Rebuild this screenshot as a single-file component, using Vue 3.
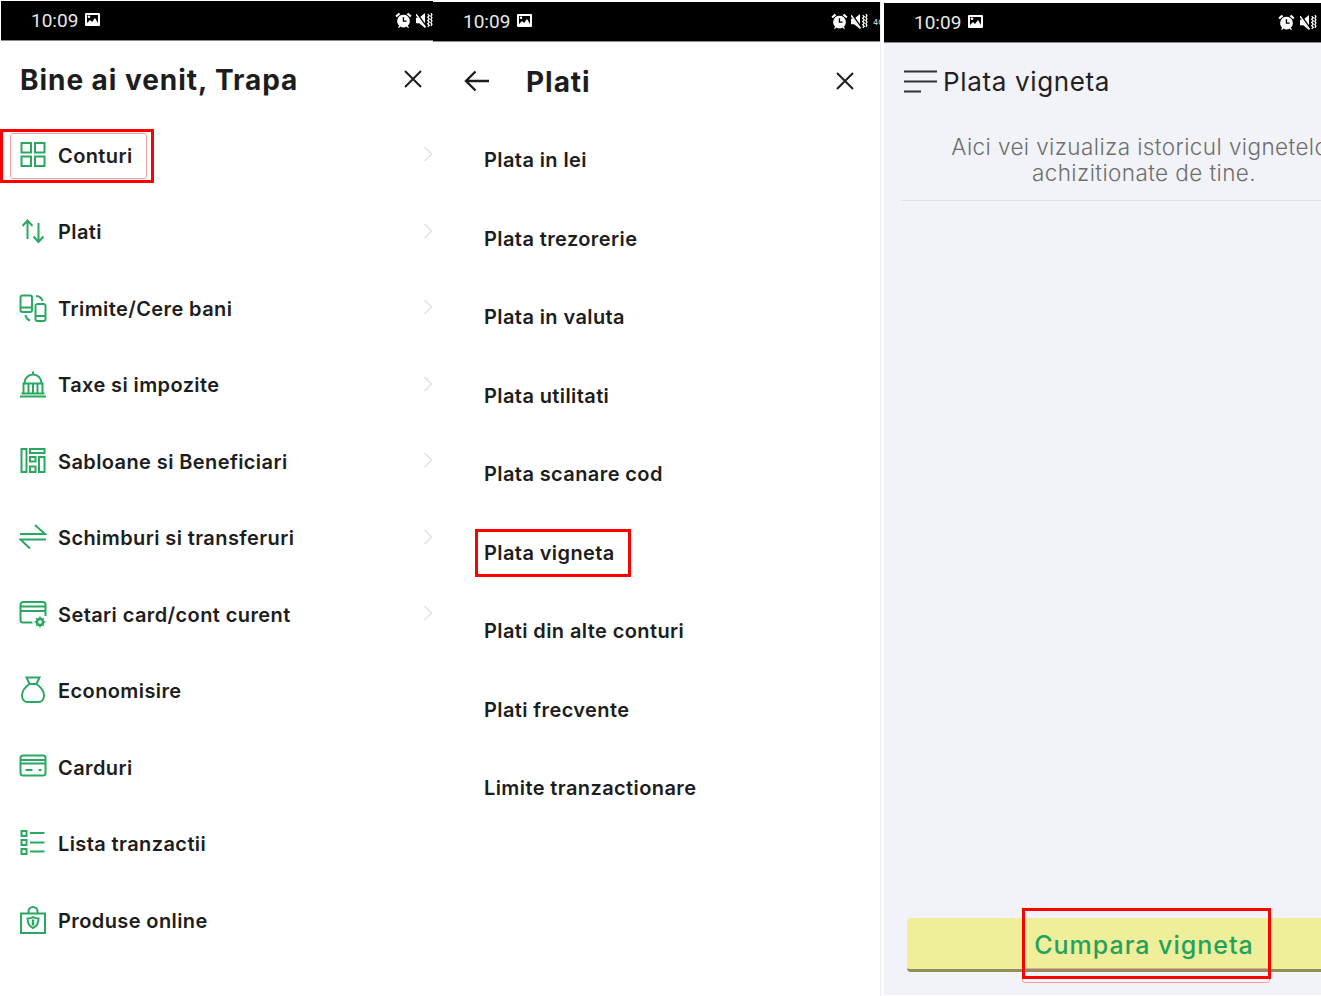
<script setup>
const menu = [
  { label: 'Conturi', icon: 'grid', chevron: true, mark: true },
  { label: 'Plati', icon: 'updown', chevron: true },
  { label: 'Trimite/Cere bani', icon: 'phones', chevron: true },
  { label: 'Taxe si impozite', icon: 'bank', chevron: true },
  { label: 'Sabloane si Beneficiari', icon: 'layout', chevron: true },
  { label: 'Schimburi si transferuri', icon: 'swap', chevron: true },
  { label: 'Setari card/cont curent', icon: 'cardgear', chevron: true },
  { label: 'Economisire', icon: 'bag', chevron: false },
  { label: 'Carduri', icon: 'card', chevron: false },
  { label: 'Lista tranzactii', icon: 'list', chevron: false },
  { label: 'Produse online', icon: 'shop', chevron: false }
]
const plati = ['Plata in lei', 'Plata trezorerie', 'Plata in valuta', 'Plata utilitati', 'Plata scanare cod', 'Plata vigneta', 'Plati din alte conturi', 'Plati frecvente', 'Limite tranzactionare']
</script>

<template>
  <div class="page">
    <section class="panel one">
      <div class="status">
        <span class="time">10:09</span>
        <svg class="pic" viewBox="0 0 15 13"><path fill="#fff" fill-rule="evenodd" d="M1 0h13a1 1 0 0 1 1 1v11a1 1 0 0 1-1 1H1a1 1 0 0 1-1-1V1a1 1 0 0 1 1-1Zm1 2v8l3-3 2 2 3-4 3 5V2Zm2 .5a1.300 1.300 0 1 1 0 2.600 1.300 1.300 0 0 1 0-2.600Z"/></svg>
        <span class="spacer"></span>
        <svg class="alarm" viewBox="0 0 16 16"><path fill="#fff" d="M8 2.500a6 6 0 0 1 4 10.400l1.200 1.600-1 .6-1.300-1.400a6 6 0 0 1-5.800 0L3.800 15l-1-.6L4 12.900A6 6 0 0 1 8 2.500Zm-.7 2.500v4.200h3.700V8H8.600V5ZM3.500.8 5 2.100 1.700 5 .4 3.500Zm9 0 3.100 2.700L14.300 5 11 2.100Z"/></svg>
        <svg class="mute" viewBox="0 0 16 16"><path fill="#fff" d="M0 5.500h3L8.500 1v14L3 10.500H0Z"/><path d="M.5 1.500l9 12.500" stroke="#000" stroke-width="2.400"/><path d="M0 2l9 12.500" stroke="#fff" stroke-width="1.400"/><path d="M11 2l1.500 1.500L11 5l1.500 1.500L11 8l1.500 1.500L11 11l1.500 1.500L11 14M14 1l1 1.500L14 4l1 1.500L14 7l1 1.500L14 10l1 1.500L14 13" fill="none" stroke="#fff" stroke-width="1.200"/></svg>
      </div>
      <header class="head first">
        <h1>Bine ai venit, Trapa</h1>
        <svg class="close" viewBox="0 0 20 20"><path d="M2 2l16 16M18 2L2 18" stroke="#1d1d1d" stroke-width="2" fill="none"/></svg>
      </header>
      <ul class="menu">
        <li v-for="item in menu" :key="item.label" class="row">
          <template v-if="item.mark">
            <span class="soft"></span>
            <span class="redbox mark1"></span>
          </template>
          <svg class="ico" viewBox="0 0 28 28" fill="none" stroke="#2aa862" stroke-width="2">
            <g v-if="item.icon === 'grid'"><rect x="2.500" y="2" width="9.500" height="9.500"/><rect x="16" y="2" width="9.500" height="9.500"/><rect x="2.500" y="15.500" width="9.500" height="9.500"/><rect x="16" y="15.500" width="9.500" height="9.500"/></g>
            <g v-else-if="item.icon === 'updown'"><path d="M8.500 22V3.500M3.500 9l5-5.500 5 5.500M19.500 6V25M14.500 19.500l5 5.500 5-5.500"/></g>
            <g v-else-if="item.icon === 'phones'"><rect x="1.500" y="1.500" width="11.500" height="16.500" rx="2"/><path d="M1.500 13.500h11.500M17.500 10h7a2 2 0 0 1 2 2v13a2 2 0 0 1-2 2h-6a2 2 0 0 1-2-2V12a2 2 0 0 1 1-2M16.500 22h10M17 2a7 7 0 0 1 6.500 5M11 26.500A7 7 0 0 1 6.500 21"/></g>
            <g v-else-if="item.icon === 'bank'"><path d="M1 26.500h26M2.500 23.500h23M3.500 13.500h21M4.500 13v10M9.500 13v10M14 13v10M18.500 13v10M23.500 13v10M5.500 13a8.500 8.500 0 0 1 17 0M14 4.500V1.500"/></g>
            <g v-else-if="item.icon === 'layout'"><rect x="2.500" y="2" width="5" height="23"/><rect x="11" y="2" width="14.500" height="4"/><rect x="11" y="10" width="5.500" height="4.500"/><rect x="11" y="19.500" width="5.500" height="5.500"/><rect x="20" y="10" width="5.500" height="15"/></g>
            <g v-else-if="item.icon === 'swap'"><path d="M1 11h25L16 2M27 16.500H1.500L11 25.500"/></g>
            <g v-else-if="item.icon === 'cardgear'"><path d="M13.500 22.500H4A2.500 2.500 0 0 1 1.500 20V4.500A2.500 2.500 0 0 1 4 2h20a2.500 2.500 0 0 1 2.500 2.500V16M1.500 6.500h25M1.500 11h25"/><circle cx="21" cy="22" r="3.300" stroke-width="2.200"/><path d="M21 16.500v11M15.500 22h11M17.200 18.200l7.600 7.600M24.800 18.200l-7.600 7.600" stroke-width="1.500"/><circle cx="21" cy="22" r="1.800" fill="#fff" stroke="none"/></g>
            <g v-else-if="item.icon === 'bag'"><path d="M7.500 1.500h13L17.500 8c5 3.500 7.500 7.500 7.500 11.500 0 4.500-3 6.500-6 6.500H9c-3 0-6-2-6-6.500C3 15.500 5.500 11.500 10.500 8ZM10.500 8h7"/></g>
            <g v-else-if="item.icon === 'card'"><rect x="1.500" y="2.500" width="25" height="20" rx="2.500"/><path d="M1.500 7h25M1.500 10.500h25M6.500 17h7M19.500 17h3"/></g>
            <g v-else-if="item.icon === 'list'"><rect x="2.500" y="2" width="5" height="5"/><rect x="2.500" y="11" width="5" height="5"/><rect x="2.500" y="20" width="5" height="5"/><path d="M11 4h14.500M11 13.500h14.500M11 22.500h14.500"/></g>
            <g v-else><path d="M2 7.500h24v19.500H2ZM9.500 7.500V5.500a4.500 4.500 0 0 1 9 0v2M8.500 12.500c3 0 4-.5 5.500-1.500 1.500 1 2.500 1.500 5.500 1.500 0 5.500-2 8-5.500 9.500-3.500-1.500-5.500-4-5.500-9.500Z"/><path d="M14 13.500v6" stroke-width="2.500"/></g>
          </svg>
          <span class="label">{{ item.label }}</span>
          <svg v-if="item.chevron" class="chev" viewBox="0 0 10 16"><path d="M1.500 1l7 7-7 7" fill="none" stroke="#e2e2e2" stroke-width="1.500"/></svg>
        </li>
      </ul>
    </section>

    <section class="panel two">
      <div class="status">
        <span class="time">10:09</span>
        <svg class="pic" viewBox="0 0 15 13"><path fill="#fff" fill-rule="evenodd" d="M1 0h13a1 1 0 0 1 1 1v11a1 1 0 0 1-1 1H1a1 1 0 0 1-1-1V1a1 1 0 0 1 1-1Zm1 2v8l3-3 2 2 3-4 3 5V2Zm2 .5a1.300 1.300 0 1 1 0 2.600 1.300 1.300 0 0 1 0-2.600Z"/></svg>
        <span class="spacer"></span>
        <svg class="alarm" viewBox="0 0 16 16"><path fill="#fff" d="M8 2.500a6 6 0 0 1 4 10.400l1.200 1.600-1 .6-1.300-1.400a6 6 0 0 1-5.800 0L3.800 15l-1-.6L4 12.900A6 6 0 0 1 8 2.500Zm-.7 2.500v4.200h3.700V8H8.600V5ZM3.500.8 5 2.100 1.700 5 .4 3.500Zm9 0 3.100 2.700L14.300 5 11 2.100Z"/></svg>
        <svg class="mute" viewBox="0 0 16 16"><path fill="#fff" d="M0 5.500h3L8.500 1v14L3 10.500H0Z"/><path d="M.5 1.500l9 12.500" stroke="#000" stroke-width="2.400"/><path d="M0 2l9 12.500" stroke="#fff" stroke-width="1.400"/><path d="M11 2l1.500 1.500L11 5l1.500 1.500L11 8l1.500 1.500L11 11l1.500 1.500L11 14M14 1l1 1.500L14 4l1 1.500L14 7l1 1.500L14 10l1 1.500L14 13" fill="none" stroke="#fff" stroke-width="1.200"/></svg>
        <span class="net">4G</span>
      </div>
      <header class="head second">
        <svg class="back" viewBox="0 0 26 22"><path d="M25 11H2M11.500 1.500 2 11l9.500 9.500" fill="none" stroke="#1d1d1d" stroke-width="2.400"/></svg>
        <h1>Plati</h1>
        <svg class="close" viewBox="0 0 20 20"><path d="M2 2l16 16M18 2L2 18" stroke="#1d1d1d" stroke-width="2" fill="none"/></svg>
      </header>
      <ul class="sub">
        <li v-for="p in plati" :key="p" class="subrow">
          <span class="label">{{ p }}</span>
          <span v-if="p === 'Plata vigneta'" class="redbox mark2"></span>
        </li>
      </ul>
    </section>

    <section class="panel three">
      <div class="status">
        <span class="time">10:09</span>
        <svg class="pic" viewBox="0 0 15 13"><path fill="#fff" fill-rule="evenodd" d="M1 0h13a1 1 0 0 1 1 1v11a1 1 0 0 1-1 1H1a1 1 0 0 1-1-1V1a1 1 0 0 1 1-1Zm1 2v8l3-3 2 2 3-4 3 5V2Zm2 .5a1.300 1.300 0 1 1 0 2.600 1.300 1.300 0 0 1 0-2.600Z"/></svg>
        <span class="spacer"></span>
        <svg class="alarm" viewBox="0 0 16 16"><path fill="#fff" d="M8 2.500a6 6 0 0 1 4 10.400l1.200 1.600-1 .6-1.300-1.400a6 6 0 0 1-5.800 0L3.800 15l-1-.6L4 12.900A6 6 0 0 1 8 2.500Zm-.7 2.500v4.200h3.700V8H8.600V5ZM3.500.8 5 2.100 1.700 5 .4 3.500Zm9 0 3.100 2.700L14.300 5 11 2.100Z"/></svg>
        <svg class="mute" viewBox="0 0 16 16"><path fill="#fff" d="M0 5.500h3L8.500 1v14L3 10.500H0Z"/><path d="M.5 1.500l9 12.500" stroke="#000" stroke-width="2.400"/><path d="M0 2l9 12.500" stroke="#fff" stroke-width="1.400"/><path d="M11 2l1.500 1.500L11 5l1.500 1.500L11 8l1.500 1.500L11 11l1.500 1.500L11 14M14 1l1 1.500L14 4l1 1.500L14 7l1 1.500L14 10l1 1.500L14 13" fill="none" stroke="#fff" stroke-width="1.200"/></svg>
      </div>
      <div class="canvas">
        <header class="head third">
          <svg class="burger" viewBox="0 0 33 23"><path d="M0 1.500h33M0 11.500h33M0 21.500h17" stroke="#333" stroke-width="2.200" fill="none"/></svg>
          <h2>Plata vigneta</h2>
        </header>
        <p class="info">Aici vei vizualiza istoricul vignetelor<br>achizitionate de tine.</p>
        <div class="fill"></div>
        <div class="buy">
          <span class="soft2"></span>
          <span class="buylabel">Cumpara vigneta</span>
          <span class="redbox mark3"></span>
        </div>
      </div>
    </section>
  </div>
</template>

<style>
html, body { margin: 0; background: #fff; }
</style>

<style scoped>
.page {
  display: flex;
  width: 1321px;
  height: 996px;
  overflow: hidden;
  background: #fff;
  font-family: "Inter", "Liberation Sans", sans-serif;
  color: #1d1d1d;
}
.panel { position: relative; flex: none; box-sizing: border-box; }
.one { width: 433px; padding-top: 1px; padding-left: 1px; }
.two { padding-top: 2px; border-right: 1px solid #eeeeee; box-sizing: content-box; width: 447px; }
.three { width: 437px; margin-left: 3px; padding-top: 3px; overflow: hidden; display: flex; flex-direction: column; height: 995px; }

.status {
  display: flex;
  align-items: center;
  height: 39px;
  background: #000;
  border-bottom: 1px solid #8a8a8a;
  color: #e8e8e8;
  padding-left: 30px;
  box-sizing: content-box;
  overflow: hidden;
}
.time { font-family: "Roboto", sans-serif; font-size: 19px; font-weight: 400; width: 54px; }
.pic { width: 15px; height: 13px; margin-top: -2px; }
.spacer { flex: 1; }
.alarm { width: 17px; height: 17px; margin-right: 4px; }
.mute { width: 17px; height: 17px; }
.two .alarm { margin-right: 5px; margin-left: -3px; }
.two .mute { margin-left: -2px; }
.net { color: #e0e0e0; font-size: 8px; width: 7px; margin-left: 5px; overflow: hidden; }
.three .alarm { margin-right: 5px; }
.three .mute { margin-right: 4px; }

.head { display: flex; align-items: center; box-sizing: border-box; }
.head h1 { margin: 0; font-size: 28px; font-weight: 700; letter-spacing: 0.950px; }
.first { height: 76.500px; padding: 2px 10px 0 19px; justify-content: space-between; }
.second { height: 79px; padding: 0 25px 0 31px; }
.second h1 { margin-left: 36px; flex: 1; }
.close { width: 20px; height: 20px; margin-top: -2px; }
.back { width: 26px; height: 22px; margin-top: -2px; }

.menu, .sub { list-style: none; margin: 0; padding: 0; }
.row {
  position: relative;
  display: flex;
  align-items: center;
  height: 76.500px;
  padding: 0 0 0 18px;
  box-sizing: border-box;
}
.ico { width: 28px; height: 28px; flex: none; margin-top: -2px; }
.label { font-size: 20px; font-weight: 600; letter-spacing: 0.400px; }
.row .label { margin-left: 11px; flex: 1; }
.chev { width: 10px; height: 16px; margin-top: -3px; }

.soft { position: absolute; left: 9px; top: 15px; width: 137px; height: 46px; border: 1px solid #f4a0a0; border-radius: 3px; box-sizing: border-box; }
.redbox { position: absolute; border: 3px solid #f00; box-sizing: border-box; pointer-events: none; }
.mark1 { left: -1px; top: 11.500px; width: 154px; height: 54px; }

.subrow {
  position: relative;
  display: flex;
  align-items: center;
  height: 78.500px;
  padding-left: 51px;
}
.mark2 { left: 42px; top: 15px; width: 156px; height: 48px; }

.canvas {
  display: flex;
  flex-direction: column;
  flex: 1;
  width: 520px;
  background: #f1f3f8;
}
.third { height: 77px; padding-left: 20px; }
.burger { width: 33px; height: 23px; margin-right: 6px; }
.third h2 { margin: 0; font-size: 26px; font-weight: 400; letter-spacing: 0.650px; color: #222; }
.info {
  margin: 0 0 0 17px;
  padding: 14px 0 14px;
  border-bottom: 1px solid #dde0e5;
  text-align: center;
  font-size: 22.500px;
  line-height: 26px;
  font-weight: 300;
  letter-spacing: 0.400px;
  color: #6e6e6e;
  width: 486px;
}
.fill { flex: 1; }
.buy {
  position: relative;
  display: flex;
  align-items: center;
  justify-content: center;
  width: 474px;
  height: 54px;
  margin: 0 0 23px 23px;
  background: #efee9b;
  border-bottom: 3px solid #8f8f5a;
  border-radius: 4px;
  box-sizing: border-box;
}
.buylabel { font-size: 25px; font-weight: 500; color: #22a35b; letter-spacing: 1px; margin-top: 3px; }
.mark3 { left: 115px; top: -10px; width: 249px; height: 71px; }
.soft2 { position: absolute; left: 115px; top: 50px; width: 248px; height: 15px; border: 1px solid #f4a0a0; border-radius: 3px; box-sizing: border-box; }
</style>
